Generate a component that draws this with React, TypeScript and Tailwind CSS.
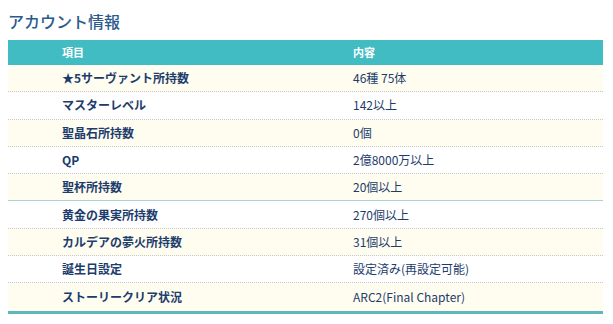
import React from "react";

const rows: { label: string; value: string; solid?: boolean }[] = [
  { label: "★5サーヴァント所持数", value: "46種 75体" },
  { label: "マスターレベル", value: "142以上" },
  { label: "聖晶石所持数", value: "0個" },
  { label: "QP", value: "2億8000万以上" },
  { label: "聖杯所持数", value: "20個以上", solid: true },
  { label: "黄金の果実所持数", value: "270個以上" },
  { label: "カルデアの夢火所持数", value: "31個以上" },
  { label: "誕生日設定", value: "設定済み(再設定可能)" },
  { label: "ストーリークリア状況", value: "ARC2(Final Chapter)" },
];

const App = () => {
  return (
    <div
      className="w-[613px] h-[324px] bg-white px-2 pt-[10px]"
      style={{ fontFamily: '"Noto Sans CJK JP", "Noto Sans", sans-serif' }}
    >
      <h2 className="text-[16px] leading-[22px] text-[#2a5a8e] font-medium">
        アカウント情報
      </h2>

      <div className="mt-[8px] w-[595px] border-b-[3px] border-[#5bb8bd]">
        <div className="grid grid-cols-[345px_1fr] h-[25px] items-center bg-[#40bcc2] text-white font-bold text-[11px]">
          <div className="pl-[54px]">項目</div>
          <div>内容</div>
        </div>
        {rows.map((row, i) => (
          <div
            key={row.label}
            className={`grid grid-cols-[345px_1fr] h-[27.3px] items-center text-[12px] text-[#1c3c6c] ${
              i % 2 === 0 ? "bg-[#fffdf0]" : "bg-white"
            } ${
              i === rows.length - 1
                ? ""
                : row.solid
                ? "border-b border-[#a9d3d6]"
                : "border-b border-dotted border-[#c8c8c8]"
            }`}
          >
            <div className="pl-[54px] font-bold">{row.label}</div>
            <div>{row.value}</div>
          </div>
        ))}
      </div>
    </div>
  );
};

export default App;
